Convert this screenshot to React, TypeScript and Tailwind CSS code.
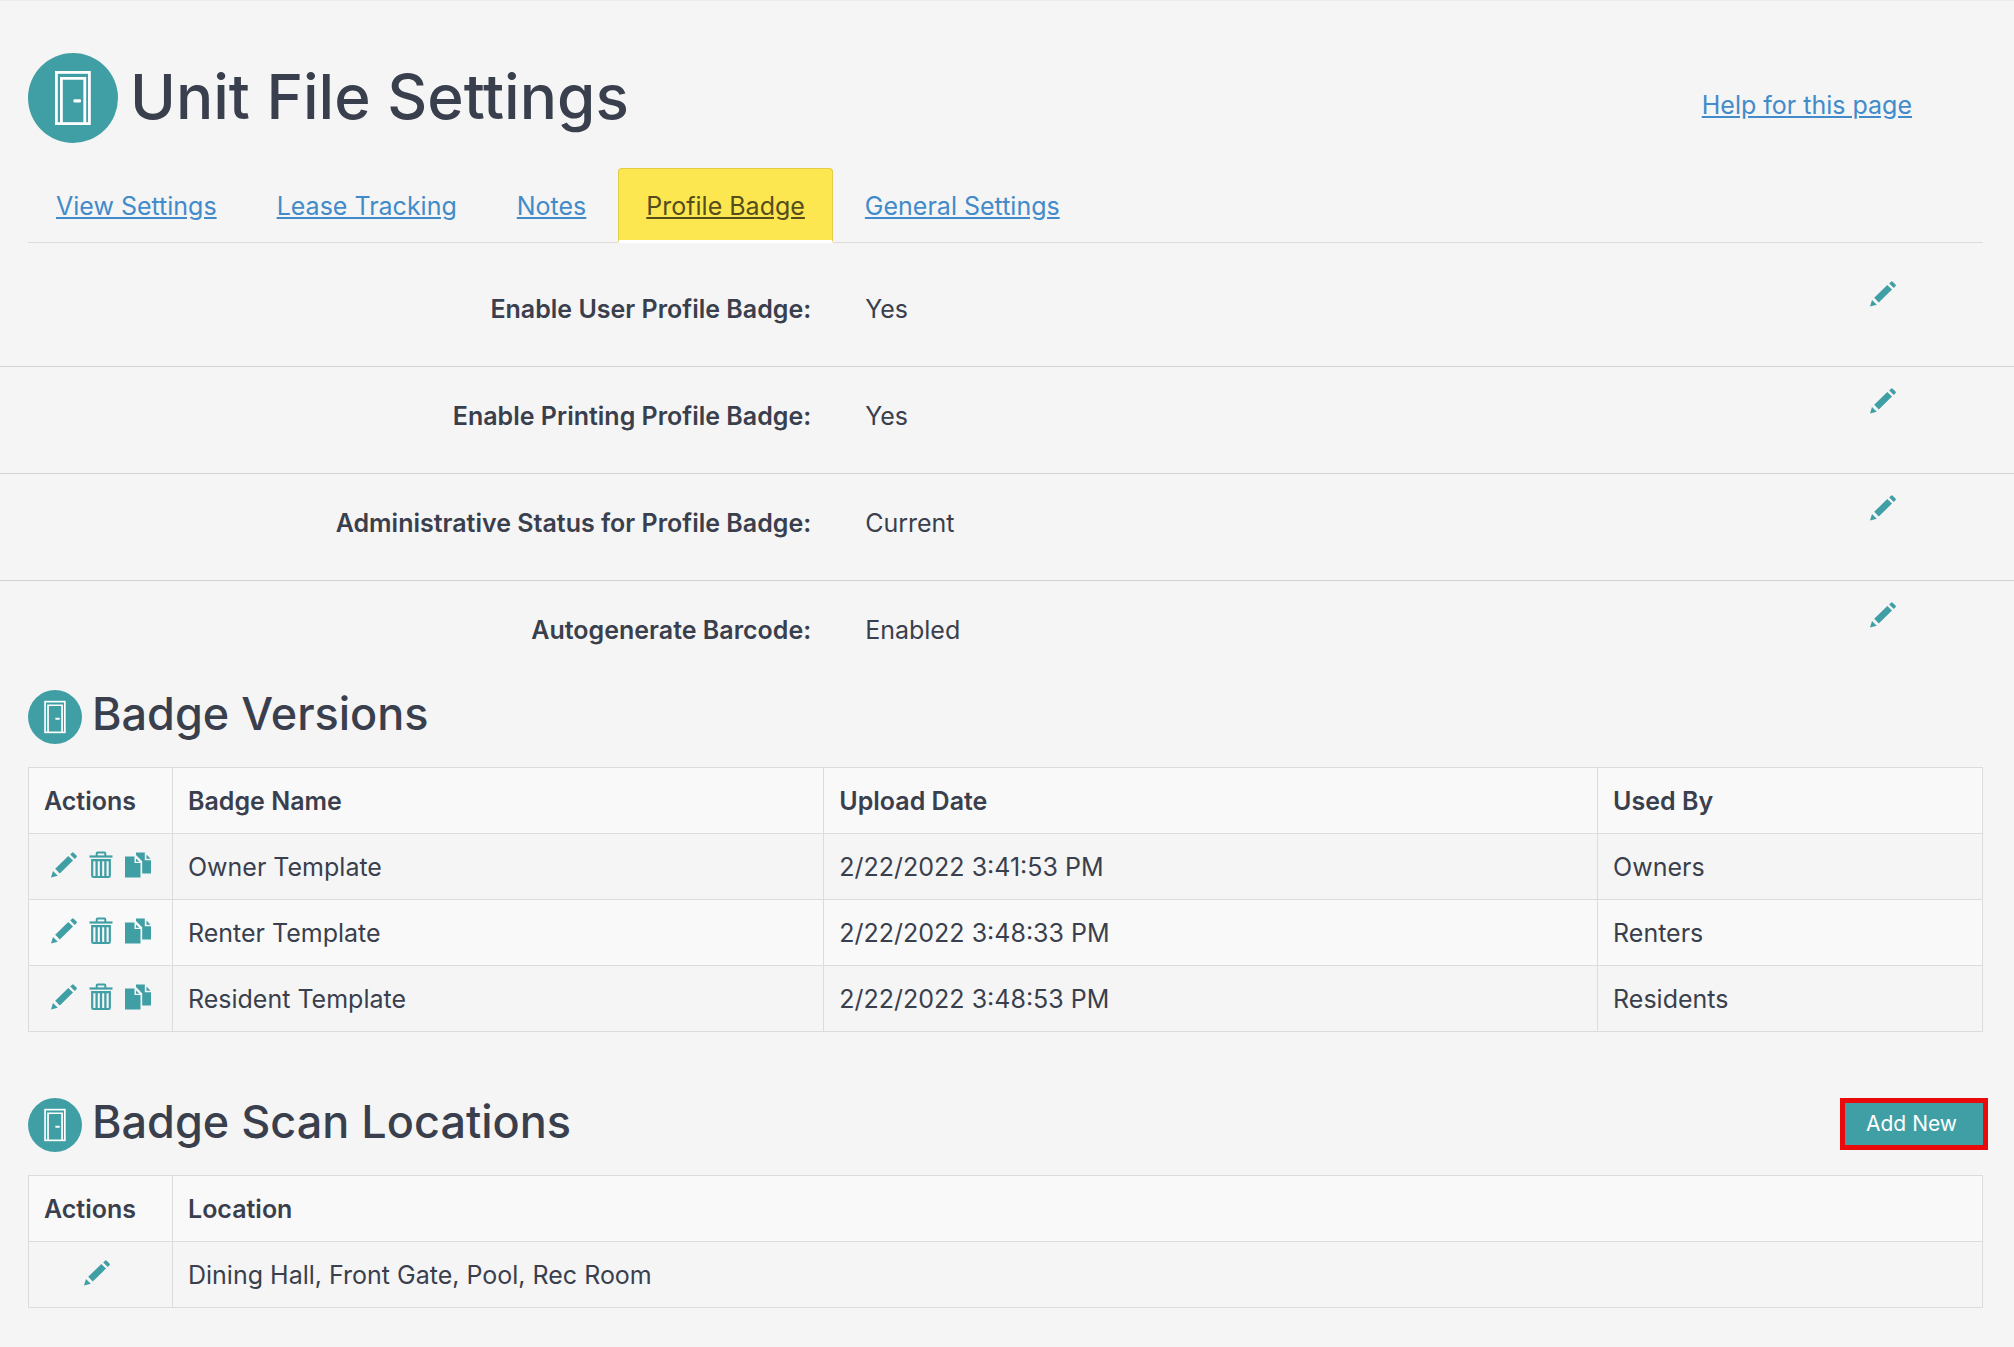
import type { ReactNode } from 'react'

interface Setting {
  label: string
  value: string
}

interface BadgeVersion {
  name: string
  uploaded: string
  usedBy: string
}

const TABS = ['View Settings', 'Lease Tracking', 'Notes', 'Profile Badge', 'General Settings']

const SETTINGS: Setting[] = [
  { label: 'Enable User Profile Badge:', value: 'Yes' },
  { label: 'Enable Printing Profile Badge:', value: 'Yes' },
  { label: 'Administrative Status for Profile Badge:', value: 'Current' },
  { label: 'Autogenerate Barcode:', value: 'Enabled' },
]

const VERSIONS: BadgeVersion[] = [
  { name: 'Owner Template', uploaded: '2/22/2022 3:41:53 PM', usedBy: 'Owners' },
  { name: 'Renter Template', uploaded: '2/22/2022 3:48:33 PM', usedBy: 'Renters' },
  { name: 'Resident Template', uploaded: '2/22/2022 3:48:53 PM', usedBy: 'Residents' },
]

function DoorIcon({ className }: { className: string }) {
  return (
    <svg viewBox="0 0 90 90" className={className} aria-hidden="true">
      <circle cx="45" cy="45" r="45" fill="#409fa5" />
      <g fill="none" stroke="#fff" strokeWidth="2.8">
        <rect x="28.4" y="19.4" width="33" height="51.2" />
        <path d="M33.4 70.5V25.4h23.4v45.1" />
      </g>
      <rect x="45.5" y="46.2" width="7.5" height="3.2" rx="1" fill="#fff" />
    </svg>
  )
}

function PencilIcon() {
  return (
    <svg viewBox="0 0 26 26" className="size-[26px]" fill="currentColor" aria-hidden="true">
      <path d="M0 25.5 2 19 6.8 23.7Z" />
      <path d="M4.2 16.8 17.3 4 22 8.6 8.8 21.6Z" />
      <path d="M19.2 2.4 21 .7Q21.8 0 22.6.7L25.5 3.6Q26.2 4.4 25.5 5.2L23.8 7Z" />
    </svg>
  )
}

function TrashIcon() {
  return (
    <svg viewBox="0 0 24 28" className="h-7 w-6" fill="none" stroke="currentColor" aria-hidden="true">
      <path d="M.5 5.5h23" strokeWidth="2.2" />
      <path d="M7.7 5V2.4Q7.7 1.5 8.6 1.5h6.8q.9 0 .9.9V5" strokeWidth="2" />
      <path d="M3.2 9.2h17.6v15.6q0 1.2-1.2 1.2H4.4q-1.2 0-1.2-1.2Z" strokeWidth="2.2" />
      <path d="M7.6 9v17M12 9v17M16.4 9v17" strokeWidth="2.3" />
    </svg>
  )
}

function CopyIcon() {
  return (
    <svg viewBox="0 0 26 26" className="size-[26px]" fill="currentColor" aria-hidden="true">
      <path d="M0 4.5h9.5v6.5h6V25.5H0Z" />
      <path d="M11 6.5 14.3 9.7H11Z" />
      <path d="M11 .5h8.8v7.8H26V21.5h-8.8V9.2L11 3Z" />
      <path d="M21.5 2.5 25.5 6.7h-4Z" />
    </svg>
  )
}

function IconButton({ label, children }: { label: string; children: ReactNode }) {
  return (
    <button type="button" aria-label={label} className="block cursor-pointer text-[#409fa5]">
      {children}
    </button>
  )
}

function SectionTitle({ children }: { children: ReactNode }) {
  return (
    <div className="flex items-center gap-2.5">
      <DoorIcon className="size-[54px] shrink-0" />
      <h2 className="pb-1.5 text-[45px] leading-[48px] font-medium">{children}</h2>
    </div>
  )
}

function Cell({ children }: { children: ReactNode }) {
  return <td className="border border-[#dcdcdc] px-[15px]">{children}</td>
}

function HeadCell({ className, children }: { className?: string; children: ReactNode }) {
  return (
    <th scope="col" className={`border border-[#dcdcdc] px-[15px] text-left font-semibold ${className ?? ''}`}>
      {children}
    </th>
  )
}

export default function App() {
  return (
    <div className="min-h-screen border-t border-[#ebebeb] bg-[#f5f5f5] pr-[31px] pl-7 font-['Inter','Liberation_Sans',sans-serif] text-[25px] leading-[36px] text-[#3a3f4d]">
      <header className="flex items-center justify-between pt-[52px]">
        <div className="flex items-center gap-3">
          <DoorIcon className="size-[90px] shrink-0" />
          <h1 className="pb-0.5 text-[62px] leading-[72px] font-medium">Unit File Settings</h1>
        </div>
        <a href="#help" className="mt-3.5 mr-[71px] text-[#428bca] underline">Help for this page</a>
      </header>

      <nav className="mt-[25px] flex gap-1 border-b border-[#dcdcdc]">
        {TABS.map(tab => {
          const active = tab === 'Profile Badge'
          return (
            <a
              key={tab}
              href={`#${tab.toLowerCase().replace(' ', '-')}`}
              aria-current={active ? 'page' : undefined}
              className={
                active
                  ? '-mb-px rounded-t-sm border border-[#e0cc45] border-b-[3px] border-b-white bg-[#fde751] px-[27px] pt-[19px] pb-4 text-[#554d1c] underline'
                  : 'border border-transparent px-[27px] pt-[19px] pb-4 text-[#428bca] underline'
              }
            >
              {tab}
            </a>
          )
        })}
      </nav>

      <dl className="mt-[17px] -mr-[31px] -ml-7 divide-y divide-[#d2d2d2]">
        {SETTINGS.map(s => (
          <div key={s.label} className="grid h-[107px] grid-cols-12 items-start pt-[21px] last:h-[85px]">
            <dt className="col-span-5 pt-2.5 pr-7 text-right font-semibold">{s.label}</dt>
            <dd className="col-span-7 flex items-start justify-between pr-[118px] pl-[26px]">
              <span className="pt-2.5">{s.value}</span>
              <IconButton label={`Edit ${s.label}`}><PencilIcon /></IconButton>
            </dd>
          </div>
        ))}
      </dl>

      <section className="mt-6">
        <SectionTitle>Badge Versions</SectionTitle>
        <table className="mt-[23px] w-full table-fixed border-collapse">
          <thead>
            <tr className="h-[66px] bg-[#f9f9f9]">
              <HeadCell className="w-36">Actions</HeadCell>
              <HeadCell className="w-1/3">Badge Name</HeadCell>
              <HeadCell className="w-[39.6%]">Upload Date</HeadCell>
              <HeadCell>Used By</HeadCell>
            </tr>
          </thead>
          <tbody>
            {VERSIONS.map(v => (
              <tr key={v.name} className="h-[66px] even:bg-[#f9f9f9]">
                <td className="border border-[#dcdcdc]">
                  <div className="flex items-center justify-center gap-3 pb-1">
                    <IconButton label={`Edit ${v.name}`}><PencilIcon /></IconButton>
                    <IconButton label={`Delete ${v.name}`}><TrashIcon /></IconButton>
                    <IconButton label={`Copy ${v.name}`}><CopyIcon /></IconButton>
                  </div>
                </td>
                <Cell>{v.name}</Cell>
                <Cell>{v.uploaded}</Cell>
                <Cell>{v.usedBy}</Cell>
              </tr>
            ))}
          </tbody>
        </table>
      </section>

      <section className="mt-[66px]">
        <div className="flex items-start justify-between">
          <SectionTitle>Badge Scan Locations</SectionTitle>
          <button
            type="button"
            className="-mr-[5px] h-[52px] cursor-pointer border-[5px] border-[#eb0a0a] bg-[#409fa5] pr-[26px] pl-[21px] text-[21px] leading-[42px] text-white"
          >
            Add New
          </button>
        </div>
        <table className="mt-[23px] w-full table-fixed border-collapse">
          <thead>
            <tr className="h-[66px] bg-[#f9f9f9]">
              <HeadCell className="w-36">Actions</HeadCell>
              <HeadCell>Location</HeadCell>
            </tr>
          </thead>
          <tbody>
            <tr className="h-[66px]">
              <td className="border border-[#dcdcdc]">
                <div className="flex justify-center pr-2 pb-1">
                  <IconButton label="Edit locations"><PencilIcon /></IconButton>
                </div>
              </td>
              <Cell>Dining Hall, Front Gate, Pool, Rec Room</Cell>
            </tr>
          </tbody>
        </table>
      </section>
    </div>
  )
}
